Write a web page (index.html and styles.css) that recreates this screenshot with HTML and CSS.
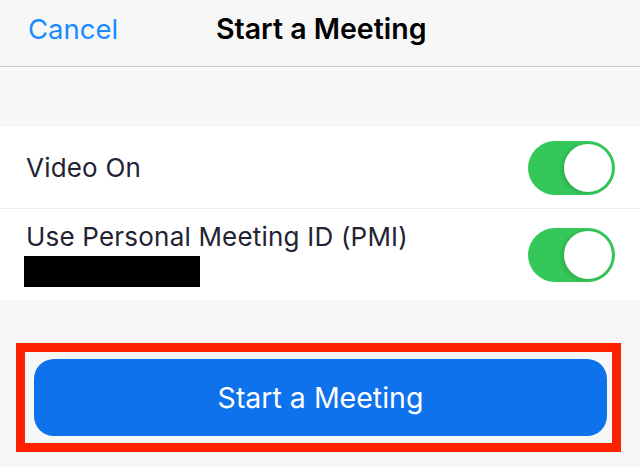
FILE: index.html
```html
<!DOCTYPE html>
<html lang="en">
<head>
    <meta charset="UTF-8">
    <meta name="viewport" content="width=device-width, initial-scale=1.0">
    <title>Start a Meeting</title>
    <link rel="stylesheet" href="styles.css">
</head>
<body>
    <header class="nav-bar">
        <span class="nav-cancel">Cancel</span>
        <h1 class="nav-title">Start a Meeting</h1>
    </header>

    <section class="settings">
        <div class="setting-row">
            <span class="setting-label">Video On</span>
            <span class="toggle"><span class="knob"></span></span>
        </div>
        <div class="setting-row setting-row-tall">
            <div class="setting-text">
                <span class="setting-label">Use Personal Meeting ID (PMI)</span>
                <span class="redacted"></span>
            </div>
            <span class="toggle"><span class="knob"></span></span>
        </div>
    </section>

    <div class="highlight">
        <button class="start-button">Start a Meeting</button>
    </div>
</body>
</html>
```

FILE: styles.css
```css
* {
    margin: 0;
    padding: 0;
    box-sizing: border-box;
}

body {
    background: #f7f7f7;
    font-family: Inter, 'Noto Sans', sans-serif;
    color: #232333;
    width: 640px;
    height: 467px;
    overflow: hidden;
}

/* Barra de navegação */
.nav-bar {
    display: flex;
    align-items: center;
    height: 67px;
    padding: 0 0 9px 28px;
    border-bottom: 1px solid #c8c8cc;
}

.nav-cancel {
    color: #1a8cff;
    font-size: 27.5px;
    width: 188px;
}

.nav-title {
    font-size: 28.5px;
    font-weight: 600;
    color: #000;
}

/* Lista de opções */
.settings {
    margin-top: 60px;
    background: #fff;
}

.setting-row {
    display: flex;
    align-items: center;
    justify-content: space-between;
    height: 81px;
    padding: 0 25px 0 26px;
}

.setting-row + .setting-row {
    border-top: 1px solid #ececec;
}

.setting-row-tall {
    height: 92px;
}

.setting-label {
    font-size: 26px;
    letter-spacing: 0.2px;
    line-height: 30px;
}

.setting-text {
    display: flex;
    flex-direction: column;
    gap: 4px;
}

.redacted {
    display: block;
    width: 176px;
    height: 31px;
    background: #000;
    margin-left: -2px;
}

.toggle {
    display: flex;
    justify-content: flex-end;
    width: 87px;
    height: 54px;
    padding: 3px;
    border-radius: 27px;
    background: #34c759;
}

.knob {
    width: 48px;
    height: 48px;
    border-radius: 50%;
    background: #fff;
    box-shadow: -2px 1px 4px rgba(0, 0, 0, 0.15);
}

/* Botão principal com destaque */
.highlight {
    margin: 43px 19px 0 16px;
    border: 9px solid #ff2200;
    padding: 7px 5px 7px 9px;
}

.start-button {
    display: block;
    width: 100%;
    height: 77px;
    border: none;
    border-radius: 20px;
    background: #0e72ed;
    color: #fff;
    font-family: Inter, 'Noto Sans', sans-serif;
    font-size: 28.5px;
}
```
